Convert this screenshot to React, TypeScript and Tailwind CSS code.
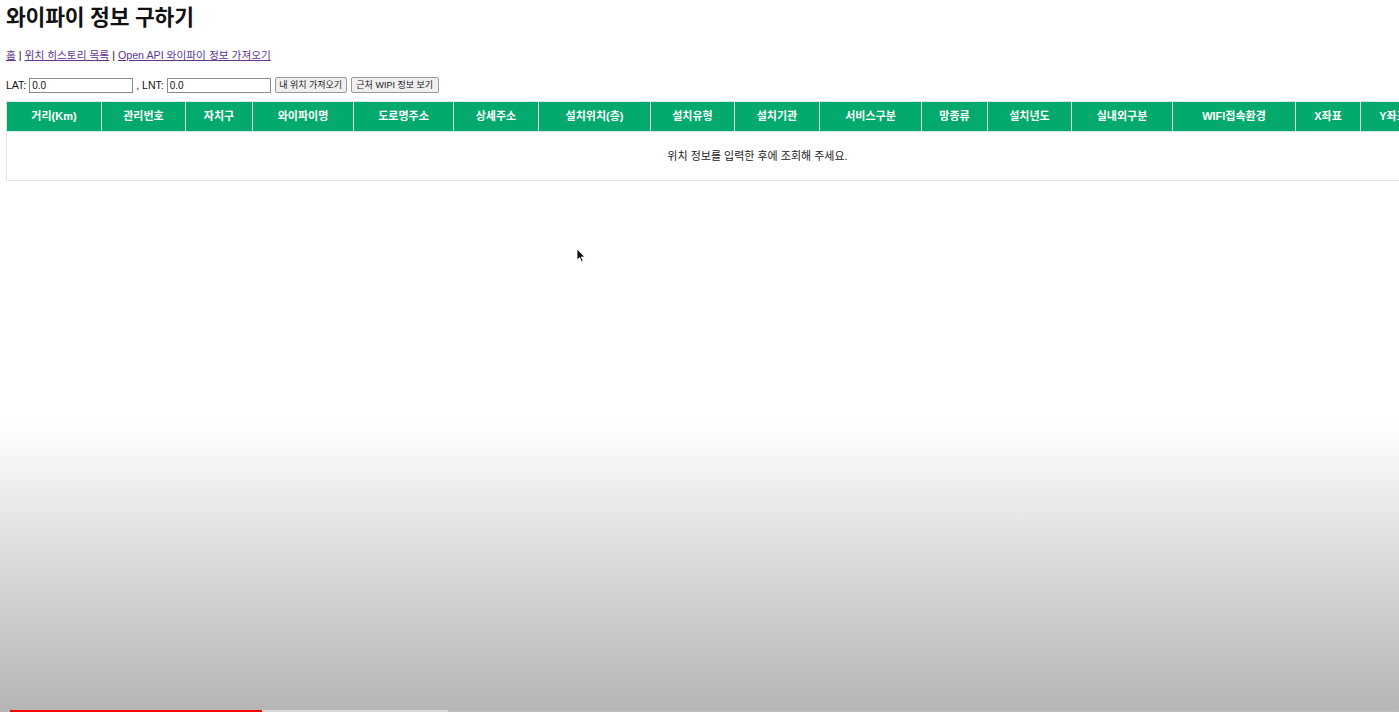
import React from 'react'

const FONT = '"Liberation Sans", "Noto Sans CJK KR", sans-serif'

const COLUMNS: { label: string; width: number }[] = [
  { label: '거리(Km)', width: 95 },
  { label: '관리번호', width: 84 },
  { label: '자치구', width: 67 },
  { label: '와이파이명', width: 101 },
  { label: '도로명주소', width: 100 },
  { label: '상세주소', width: 85 },
  { label: '설치위치(층)', width: 112 },
  { label: '설치유형', width: 84 },
  { label: '설치기관', width: 85 },
  { label: '서비스구분', width: 102 },
  { label: '망종류', width: 66 },
  { label: '설치년도', width: 84 },
  { label: '실내외구분', width: 101 },
  { label: 'WIFI접속환경', width: 123 },
  { label: 'X좌표', width: 65 },
  { label: 'Y좌표', width: 65 },
  { label: '작업일자', width: 83 },
]

function Cursor() {
  return (
    <svg className="absolute left-[576px] top-[248px]" width="10" height="15" viewBox="0 0 10 15">
      <path d="M1 1 L1 12 L3.6 9.6 L5.6 14 L7.2 13.3 L5.3 9 L8.8 9 Z" fill="#111" stroke="#fff" strokeWidth="0.8" />
    </svg>
  )
}

export default function App() {
  const tableWidth = COLUMNS.reduce((s, c) => s + c.width, 0)

  return (
    <div className="relative w-[1399px] h-[712px] overflow-hidden bg-white text-[#111]" style={{ fontFamily: FONT }}>
      <div className="px-[6px] pt-[5px]">
        <h1 className="text-[21.5px] font-bold leading-[26px] tracking-[-0.2px]">와이파이 정보 구하기</h1>

        <div className="mt-[17px] text-[10.7px] leading-[14px]">
          <a href="#" className="underline text-[#62348f]">홈</a>
          <span> | </span>
          <a href="#" className="underline text-[#62348f]">위치 히스토리 목록</a>
          <span> | </span>
          <a href="#" className="underline text-[#62348f]">Open API 와이파이 정보 가져오기</a>
        </div>

        <div className="mt-[15px] flex items-center text-[10.5px] leading-none">
          <span>LAT:</span>
          <input
            readOnly
            value="0.0"
            className="ml-[3px] w-[104px] h-[15px] border border-[#8a8a8a] px-[2px] text-[10px] outline-none"
          />
          <span className="ml-[3px]">, LNT:</span>
          <input
            readOnly
            value="0.0"
            className="ml-[3px] w-[104px] h-[15px] border border-[#8a8a8a] px-[2px] text-[10px] outline-none"
          />
          <button className="ml-[4px] h-[16px] w-[72px] border border-[#9a9a9a] rounded-[2px] bg-[#efefef] text-[9px] text-[#222]">
            내 위치 가져오기
          </button>
          <button className="ml-[4px] h-[16px] w-[88px] border border-[#9a9a9a] rounded-[2px] bg-[#efefef] text-[9px] text-[#222]">
            근처 WIPI 정보 보기
          </button>
        </div>

        <table
          className="mt-[8px] table-fixed border-collapse border border-[#e4e4e4] text-[11px]"
          style={{ width: tableWidth }}
        >
          <colgroup>
            {COLUMNS.map((c) => (
              <col key={c.label} style={{ width: c.width }} />
            ))}
          </colgroup>
          <thead>
            <tr className="h-[30px] bg-[#04aa6d]">
              {COLUMNS.map((c) => (
                <th key={c.label} className="border border-[#d9e8e0] text-white font-bold text-center">
                  {c.label}
                </th>
              ))}
            </tr>
          </thead>
          <tbody>
            <tr className="h-[49px]">
              <td colSpan={COLUMNS.length} className="border border-[#e4e4e4] text-center text-[#222]">
                위치 정보를 입력한 후에 조회해 주세요.
              </td>
            </tr>
          </tbody>
        </table>
      </div>

      <Cursor />

      {/* video player shade + progress bar */}
      <div className="absolute left-0 right-0 bottom-0 h-[292px] bg-gradient-to-b from-transparent to-[rgba(0,0,0,0.29)] pointer-events-none" />
      <div className="absolute left-[10px] right-0 bottom-0 h-[2px] flex">
        <div className="w-[252px] bg-[#ff0000]" />
        <div className="w-[186px] bg-[#d9d9d9]" />
        <div className="flex-1 bg-[#bdbdbd]" />
      </div>
    </div>
  )
}
